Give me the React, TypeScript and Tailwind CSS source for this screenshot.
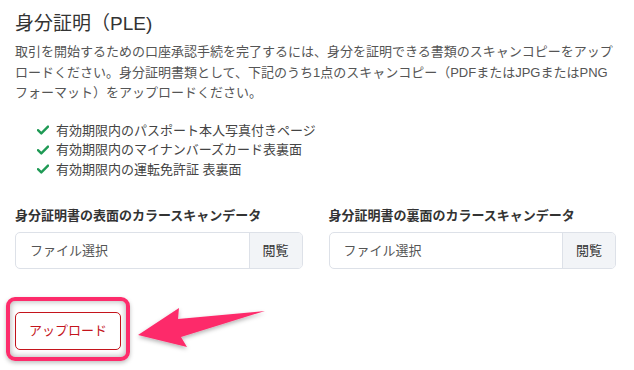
export default function App() {
  const font = { fontFamily: '"Liberation Sans", "Noto Sans CJK JP", sans-serif' };

  const docs = [
    "有効期限内のパスポート本人写真付きページ",
    "有効期限内のマイナンバーズカード表裏面",
    "有効期限内の運転免許証 表裏面",
  ];

  const uploads = [
    "身分証明書の表面のカラースキャンデータ",
    "身分証明書の裏面のカラースキャンデータ",
  ];

  return (
    <div
      className="relative w-[634px] h-[370px] overflow-hidden bg-white pl-[15px] pr-[18px] pt-[12px]"
      style={font}
    >
      <h1 className="text-[19px] leading-[24px] text-[#333]">身分証明（PLE)</h1>

      <p className="mt-[6px] text-[13px] leading-[20.5px] text-[#555]">
        取引を開始するための口座承認手続を完了するには、身分を証明できる書類のスキャンコピーをアップロードください。身分証明書類として、下記のうち1点のスキャンコピー（PDFまたはJPGまたはPNGフォーマット）をアップロードください。
      </p>

      {/* Accepted documents */}
      <ul className="mt-[17px] pl-[22px] flex flex-col">
        {docs.map((d) => (
          <li key={d} className="flex items-center gap-[7px] text-[13px] leading-[19.5px] text-[#444]">
            <svg width="12" height="10" viewBox="0 0 12 10" className="shrink-0">
              <path d="M1 5.2 L4.3 8.4 L11 1.6" fill="none" stroke="#1f9a55" strokeWidth="2.4" strokeLinecap="round" strokeLinejoin="round" />
            </svg>
            <span>{d}</span>
          </li>
        ))}
      </ul>

      {/* File inputs */}
      <div className="mt-[27px] grid grid-cols-2 gap-x-[26px]">
        {uploads.map((label) => (
          <div key={label} className="flex flex-col">
            <label className="text-[13px] leading-[20px] font-bold text-[#333]">{label}</label>
            <div className="mt-[6px] flex h-[37px] rounded-[5px] border border-[#dde1e8] overflow-hidden">
              <div className="flex-1 flex items-center pl-[14px] text-[13px] text-[#555]">ファイル選択</div>
              <div className="w-[53px] flex items-center justify-center border-l border-[#dde1e8] bg-[#f2f4f7] text-[13px] text-[#333]">
                閲覧
              </div>
            </div>
          </div>
        ))}
      </div>

      <button className="mt-[43px] h-[38px] w-[106px] rounded-[5px] border border-[#c4141c] bg-white text-[13px] text-[#c4141c]">
        アップロード
      </button>

      {/* Annotation: highlight box */}
      <div className="absolute left-[6px] top-[297px] w-[124px] h-[64px] rounded-[9px] border-[4px] border-[#fd2c6b] shadow-[inset_0_0_6px_rgba(0,0,0,0.35),0_2px_4px_rgba(0,0,0,0.25)] pointer-events-none" />

      {/* Annotation: arrow */}
      <svg
        className="absolute left-0 top-0 pointer-events-none"
        width="634"
        height="370"
        viewBox="0 0 634 370"
      >
        <defs>
          <filter id="sh" x="-20%" y="-20%" width="140%" height="160%">
            <feDropShadow dx="0" dy="2" stdDeviation="2" floodColor="#000" floodOpacity="0.3" />
          </filter>
        </defs>
        <polygon
          points="138,335 179,308 178,319 265,311 181,337 187,347"
          fill="#fd2c6b"
          filter="url(#sh)"
        />
      </svg>
    </div>
  );
}
